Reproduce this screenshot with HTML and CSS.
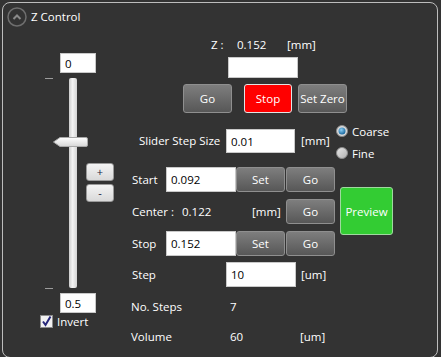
FILE: index.html
```html
<!DOCTYPE html>
<html lang="en">
<head>
    <meta charset="UTF-8">
    <title>Z Control</title>
    <link rel="stylesheet" href="styles.css">
</head>
<body>
    <div class="group">
        <div class="group-head">
            <!-- collapse toggle -->
            <svg class="collapse-icon" viewBox="0 0 20 20">
                <circle cx="10" cy="10" r="9" fill="none" stroke="#6e6e6e" stroke-width="1.5"/>
                <path d="M6.5 12 L10 8.5 L13.5 12" fill="none" stroke="#8a8a8a" stroke-width="2"/>
            </svg>
            <span class="group-title">Z Control</span>
        </div>

        <div class="group-body">
            <!-- vertical slider -->
            <div class="slider-col">
                <input class="box slider-max" value="0">
                <div class="slider">
                    <div class="ticks"><span class="tick"></span><span class="tick"></span></div>
                    <div class="track">
                        <svg class="thumb" viewBox="0 0 35 10">
                            <defs>
                                <linearGradient id="thumbFill" x1="0" y1="0" x2="0" y2="1">
                                    <stop offset="0" stop-color="#ffffff"/>
                                    <stop offset="1" stop-color="#d6d6d6"/>
                                </linearGradient>
                            </defs>
                            <path d="M0.5 5 L7 0.5 H33 Q34.5 0.5 34.5 2 V8 Q34.5 9.5 33 9.5 H7 Z" fill="url(#thumbFill)" stroke="#a8a8a8"/>
                        </svg>
                    </div>
                    <div class="nudge">
                        <button class="nudge-btn">+</button>
                        <button class="nudge-btn">-</button>
                    </div>
                </div>
                <input class="box slider-min" value="0.5">
                <label class="invert">
                    <svg class="check" viewBox="0 0 13 13">
                        <rect x="0.5" y="0.5" width="12" height="12" fill="#f2f2f2" stroke="#8c8c8c"/>
                        <path d="M3 6.5 L5.5 10 L10.5 1.5" fill="none" stroke="#26267a" stroke-width="2"/>
                    </svg>
                    Invert
                </label>
            </div>

            <!-- position controls -->
            <div class="ctrl-col">
                <div class="z-row">
                    <span class="z-label">Z :</span>
                    <span class="z-value">0.152</span>
                    <span>[mm]</span>
                </div>
                <input class="box z-input" value="">
                <div class="motion">
                    <button class="btn btn-go">Go</button>
                    <button class="btn btn-stop">Stop</button>
                    <button class="btn btn-zero">Set Zero</button>
                </div>

                <div class="step-size">
                    <span class="step-label">Slider Step Size</span>
                    <input class="box step-input" value="0.01">
                    <span class="step-unit">[mm]</span>
                    <div class="radios">
                        <div class="radio">
                            <svg class="radio-dot" viewBox="0 0 12 12">
                                <defs>
                                    <radialGradient id="dotOn" cx="0.4" cy="0.35" r="0.7">
                                        <stop offset="0" stop-color="#8fd0f5"/>
                                        <stop offset="1" stop-color="#10619a"/>
                                    </radialGradient>
                                </defs>
                                <circle cx="6" cy="6" r="5.5" fill="#dcdcdc" stroke="#8a8a8a"/>
                                <circle cx="6" cy="6" r="3.5" fill="url(#dotOn)"/>
                            </svg>
                            Coarse
                        </div>
                        <div class="radio">
                            <svg class="radio-dot" viewBox="0 0 12 12">
                                <defs>
                                    <linearGradient id="dotOff" x1="0" y1="0" x2="1" y2="1">
                                        <stop offset="0" stop-color="#e8e8e8"/>
                                        <stop offset="1" stop-color="#b0b0b0"/>
                                    </linearGradient>
                                </defs>
                                <circle cx="6" cy="6" r="5.5" fill="url(#dotOff)" stroke="#8a8a8a"/>
                            </svg>
                            Fine
                        </div>
                    </div>
                </div>

                <div class="scan">
                    <div class="scan-rows">
                        <div class="scan-row">
                            <span class="scan-label">Start</span>
                            <input class="box scan-input" value="0.092">
                            <button class="btn btn-set">Set</button>
                            <button class="btn btn-small">Go</button>
                        </div>
                        <div class="scan-row gap">
                            <span class="center-label">Center :</span>
                            <span class="center-value">0.122</span>
                            <span class="center-unit">[mm]</span>
                            <button class="btn btn-center">Go</button>
                        </div>
                        <div class="scan-row gap">
                            <span class="scan-label">Stop</span>
                            <input class="box scan-input" value="0.152">
                            <button class="btn btn-set">Set</button>
                            <button class="btn btn-small">Go</button>
                        </div>
                    </div>
                    <button class="btn btn-preview">Preview</button>
                </div>

                <div class="step-row">
                    <span class="step-row-label">Step</span>
                    <input class="box scan-input" value="10">
                    <span class="unit">[um]</span>
                </div>

                <div class="info-row steps">
                    <span class="info-label">No. Steps</span>
                    <span>7</span>
                </div>
                <div class="info-row volume">
                    <span class="info-label">Volume</span>
                    <span class="info-value">60</span>
                    <span>[um]</span>
                </div>
            </div>
        </div>
    </div>
</body>
</html>
```

FILE: styles.css
```css
* {
    box-sizing: border-box;
}

html, body {
    margin: 0;
    height: 100%;
    overflow: hidden;
}

body {
    background-color: #333333;
    font-family: "Open Sans", "Noto Sans", sans-serif;
    font-size: 11.5px;
    color: #ffffff;
}

/* group box */
.group {
    margin: 2px 0 0 2px;
    width: 436px;
    height: 356px;
    border: 1px solid #bdbdbd;
    border-radius: 8px;
}

.group-head {
    display: flex;
    align-items: center;
    gap: 4px;
    height: 28px;
    padding-left: 4px;
}

.collapse-icon {
    width: 20px;
    height: 20px;
}

.group-title {
    line-height: 16px;
}

.group-body {
    display: flex;
}

/* text boxes */
.box {
    display: block;
    background-color: #ffffff;
    border: 1px solid #c9c9c9;
    color: #000000;
    font: inherit;
    padding: 0 4px;
    margin: 0;
    outline: none;
}

/* slider column */
.slider-col {
    display: flex;
    flex-direction: column;
    width: 120px;
}

.slider-max {
    margin: 22px 0 0 57px;
    width: 36px;
    height: 20px;
}

.slider {
    display: flex;
    height: 211px;
    margin-top: 5px;
}

.ticks {
    display: flex;
    flex-direction: column;
    justify-content: space-between;
    margin-left: 42px;
    width: 8px;
}

.tick {
    height: 1px;
    background-color: #9c9c9c;
}

.track {
    position: relative;
    margin-left: 16px;
    width: 8px;
    height: 210px;
    border-radius: 2px;
    background: linear-gradient(90deg, #cdcdcd, #f4f4f4 45%, #d4d4d4);
}

.thumb {
    position: absolute;
    left: -16px;
    top: 59px;
    width: 35px;
    height: 10px;
}

.nudge {
    display: flex;
    flex-direction: column;
    gap: 3px;
    margin-left: 9px;
    padding-top: 85px;
}

.nudge-btn {
    width: 28px;
    height: 18px;
    padding: 0;
    border: 1px solid #9a9a9a;
    border-radius: 3px;
    background: linear-gradient(#f4f4f4, #d9d9d9);
    color: #1a1a40;
    font-family: inherit;
    font-size: 11px;
    line-height: 14px;
}

.slider-min {
    margin: 4px 0 0 57px;
    width: 36px;
    height: 20px;
}

.invert {
    display: flex;
    align-items: center;
    gap: 4px;
    height: 13px;
    margin: 2px 0 0 37px;
}

.check {
    width: 13px;
    height: 13px;
}

/* control column */
.ctrl-col {
    display: flex;
    flex-direction: column;
    width: 300px;
}

.z-row {
    display: flex;
    margin: 6px 0 0 88px;
    line-height: 16px;
}

.z-label {
    width: 26px;
}

.z-value {
    width: 50px;
}

.z-input {
    margin: 4px 0 0 105px;
    width: 70px;
    height: 21px;
}

.btn {
    padding: 0;
    border: 1px solid #8f8f8f;
    border-radius: 3px;
    background: linear-gradient(#7e7e7e, #575757);
    color: #ffffff;
    font: inherit;
}

.motion {
    display: flex;
    margin: 6px 0 0 60px;
    height: 29px;
}

.btn-go {
    width: 49px;
}

.btn-stop {
    width: 48px;
    margin-left: 12px;
    background: #ff0000;
    border-color: #e4e4e4;
}

.btn-zero {
    width: 49px;
    margin-left: 6px;
}

/* slider step size */
.step-size {
    display: flex;
    align-items: flex-start;
    margin-top: 12px;
}

.step-label {
    width: 87px;
    margin: 4px 0 0 16px;
    line-height: 24px;
}

.step-input {
    width: 69px;
    height: 24px;
    margin-top: 4px;
}

.step-unit {
    width: 35px;
    margin: 4px 0 0 6px;
    line-height: 24px;
}

.radios {
    display: flex;
    flex-direction: column;
    gap: 10px;
}

.radio {
    display: flex;
    align-items: center;
    gap: 4px;
    height: 12px;
}

.radio-dot {
    width: 12px;
    height: 12px;
}

/* start / center / stop */
.scan {
    display: flex;
    align-items: flex-start;
    margin-top: 8px;
}

.scan-rows {
    display: flex;
    flex-direction: column;
}

.scan-row {
    display: flex;
    align-items: center;
    height: 25px;
}

.scan-row.gap {
    margin-top: 7px;
}

.scan-label {
    width: 34px;
    margin-left: 9px;
}

.scan-input {
    width: 70px;
    height: 25px;
}

.btn-set {
    width: 49px;
    height: 25px;
}

.btn-small {
    width: 49px;
    height: 25px;
    margin-left: 1px;
}

.center-label {
    width: 50px;
    margin-left: 9px;
}

.center-value {
    width: 70px;
}

.center-unit {
    width: 34px;
}

.btn-center {
    width: 49px;
    height: 25px;
}

.btn-preview {
    width: 53px;
    height: 48px;
    margin: 20px 0 0 5px;
    background: #33cc33;
    border-color: #9fd99f;
}

/* step / info */
.step-row {
    display: flex;
    align-items: center;
    margin-top: 6px;
}

.step-row-label {
    width: 94px;
    margin-left: 9px;
}

.unit {
    margin-left: 5px;
}

.info-row {
    display: flex;
    line-height: 16px;
}

.info-row.steps {
    margin-top: 12px;
}

.info-row.volume {
    margin-top: 14px;
}

.info-label {
    width: 99px;
    margin-left: 8px;
}

.info-value {
    width: 70px;
}
```
